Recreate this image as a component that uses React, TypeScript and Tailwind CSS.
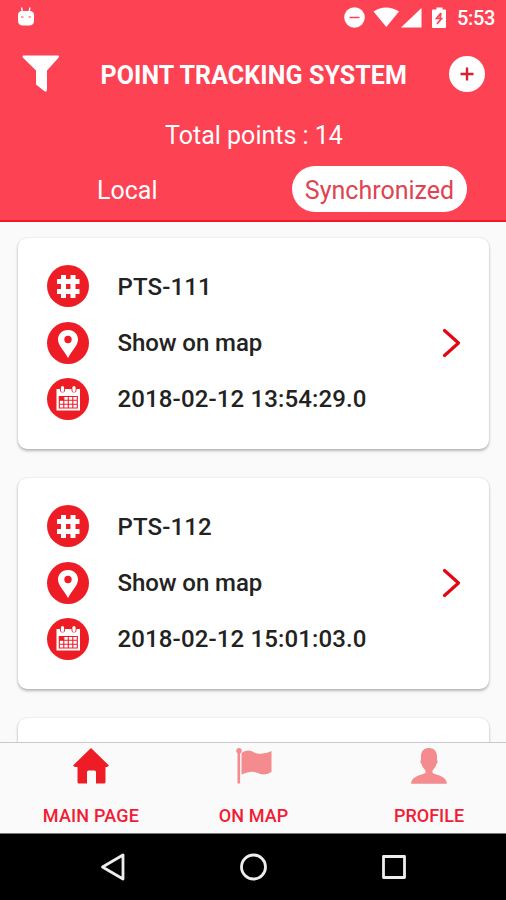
import type { ReactNode } from "react";

const points = [
  { id: "PTS-111", date: "2018-02-12 13:54:29.0" },
  { id: "PTS-112", date: "2018-02-12 15:01:03.0" },
];

function StatusBar() {
  return (
    <div className="flex h-9 items-center justify-between pl-4 pr-[11px]">
      <svg width="20" height="22" viewBox="0 0 20 22" className="mt-[-3px]">
        <path d="M5.5 1.500 6.500 6M14 1.500 13 6" stroke="#fff" strokeWidth="1.300" />
        <path d="M5 5h10q3 1 3 4v5.500q0 5-5 5H7q-5 0-5-5V9q0-3 3-4Z" fill="#fff" />
        <path d="M5 11h2.500M12.500 11H15" stroke="#fd4254" strokeWidth="1" />
      </svg>
      <div className="flex items-center">
        <svg width="115" height="24" viewBox="0 0 115 24">
          <circle cx="16.500" cy="11.500" r="10.300" fill="#fff" />
          <path d="M11.500 11.500h10" stroke="#fd4254" strokeWidth="1.500" />
          <path d="M35.500 5.500q12.500-8 25.500 0L48.300 21Z" fill="#fff" />
          <path d="M83.500 2v19.500H63Z" fill="#fff" />
          <path d="M96 3.500h2.500V1.500h6v2h2.500q1 0 1 1V21q0 1-1 1H95q-1 0-1-1V4.500q0-1 1-1Z" fill="#fff" />
          <path d="m103 7-4.500 5.500h5l-4.500 5.500M103 7l-1 5.500" fill="none" stroke="#fd4254" strokeWidth="1.700" />
        </svg>
        <span className="ml-1 w-[38px] whitespace-nowrap text-[20px] font-medium leading-6 tracking-[-0.3px]">5:53</span>
      </div>
    </div>
  );
}

function Header() {
  return (
    <header className="flex h-[222px] shrink-0 flex-col border-b-2 border-[#ef1b2b] bg-[#fd4254] text-white">
      <StatusBar />
      <div className="flex h-[75px] items-center justify-between pl-[22px] pr-[21px]">
        <svg width="38" height="38" viewBox="0 0 38 38">
          <path d="M1 .5h35.500q1 1 0 2.200L25 15.500v19.500q-.5 2.500-2.500 1.200l-8.500-6.700v-14L1 2.700Q0 1.500 1 .5Z" fill="#fff" />
        </svg>
        <h1 className="w-[308px] whitespace-nowrap pt-[3px] text-[25px] font-bold leading-none tracking-[0.100px]">
          POINT TRACKING SYSTEM
        </h1>
        <svg width="36" height="36" viewBox="0 0 36 36">
          <circle cx="18" cy="18" r="18" fill="#fff" />
          <path d="M18 11.500v13M11.500 18h13" stroke="#d8202f" strokeWidth="2.400" />
        </svg>
      </div>
      <p className="flex h-[49px] items-center justify-center pl-[2px] text-[25px] leading-none">Total points : 14</p>
      <div className="flex h-[58px] items-center pl-[97px]">
        <span className="w-[195px] pt-[2px] text-[25px] leading-none">Local</span>
        <span className="flex h-[46px] w-[175px] items-center justify-center rounded-full bg-white pt-[2px] text-[25px] leading-none text-[#e04352]">
          Synchronized
        </span>
      </div>
    </header>
  );
}

function Badge({ children }: { children: ReactNode }) {
  return (
    <svg width="42" height="42" viewBox="0 0 42 42">
      <circle cx="21" cy="21" r="21" fill="#ee1c25" />
      {children}
    </svg>
  );
}

function Card({ children }: { children?: ReactNode }) {
  return (
    <div className="flex h-[211px] shrink-0 items-center justify-between rounded-[9px] bg-white pb-[2px] pl-[29px] pr-[28px] shadow-[0_2px_3px_rgba(0,0,0,0.26),0_0_2px_rgba(0,0,0,0.14)]">
      {children}
    </div>
  );
}

function PointCard({ id, date }: { id: string; date: string }) {
  return (
    <Card>
      <div className="flex flex-col gap-[14.250px] text-[24px] font-medium leading-none tracking-[0.14px] text-[#222]">
        <div className="flex items-center gap-[28.500px]">
          <Badge>
            <path d="M16.500 10v23M26 10v23M10 16.500h22.500M10 26.500h22.500" stroke="#fff" strokeWidth="5" />
          </Badge>
          <span className="pt-px">{id}</span>
        </div>
        <div className="flex items-center gap-[28.500px]">
          <Badge>
            <path d="M21 8C14.500 8 11 12.500 11 17.500c0 5.500 5 9.500 10 18.500 5-9 10-13 10-18.500C31 12.500 27.500 8 21 8Z" fill="#fff" />
            <circle cx="21" cy="17.500" r="3.700" fill="#ee1c25" />
          </Badge>
          <span className="tracking-[-0.080px]">Show on map</span>
        </div>
        <div className="flex items-center gap-[28.500px]">
          <Badge>
            <path d="M9.500 11h23.500v21.500H9.500Z" fill="#fff" />
            <path d="M13 7v5a2.500 2.500 0 0 0 5 0V7ZM24.500 7v5a2.500 2.500 0 0 0 5 0V7Z" fill="#ee1c25" />
            <path d="M15.500 9.500v3M27 9.500v3" stroke="#fff" strokeWidth="3.200" strokeLinecap="round" />
            <path d="M12.300 18.500h18v11.500h-18ZM12.300 22.300h18M12.300 26.200h18M16.800 18.500V30M21.300 18.500V30M25.800 18.500V30" fill="none" stroke="#ee1c25" strokeWidth="1.100" />
            <path d="M12.300 18.500h4.500v3.800h-4.500Z" fill="#ee1c25" />
          </Badge>
          <span>{date}</span>
        </div>
      </div>
      <svg width="19" height="30" viewBox="0 0 19 30">
        <path d="m2.500 2.500 14 12.500-14 12.500" fill="none" stroke="#e30613" strokeWidth="3.200" strokeLinecap="round" strokeLinejoin="round" />
      </svg>
    </Card>
  );
}

function TabBar() {
  return (
    <nav className="flex h-[92px] shrink-0 border-b border-t border-b-[#777] border-t-[#c9c9c9] bg-[#fafafa] pl-[42px] text-[18px] font-medium leading-none text-[#f21c35]">
      <div className="flex w-[98px] flex-col items-center pt-[5px]">
        <svg width="36" height="36" viewBox="0 0 36 36">
          <path d="M18 0 36 17.500l-2 1.500h-1.500v15q0 1.500-1.500 1.500h-8V24q0-1.500-1.500-1.500h-6Q14 22.500 14 24v11.500H6Q4.500 35.500 4.500 34V19H2l-2-1.500Z" fill="#ee1c25" />
        </svg>
        <span className="mt-[23px] whitespace-nowrap tracking-[0.200px]">MAIN PAGE</span>
      </div>
      <div className="ml-[78px] flex w-[71px] flex-col items-center pt-[5px]">
        <svg width="36" height="36" viewBox="0 0 36 36" fill="#f38b8f">
          <circle cx="3" cy="2.800" r="2.700" />
          <path d="M1.500 2h2.600v33.500H1.500ZM5.500 5q5-3.500 10-2 5 3.500 11 2.500 5-.5 9-2.500v21q-5 3.500-11 2-6-3-11-2-4 .5-8 2.500Z" />
        </svg>
        <span className="mt-[23px] whitespace-nowrap tracking-[0.100px]">ON MAP</span>
      </div>
      <div className="ml-[104px] flex w-[72px] flex-col items-center pt-[5px]">
        <svg width="36" height="36" viewBox="0 0 36 36" fill="#f38b8f">
          <path d="M18 0c5 0 7.800 3 8 8v4q1.500 2-.8 4.500C24.500 20 22 21 21.500 23v2c4 2 14 3 14.500 10.800H0C.5 28 10.500 27 14.500 25v-2c-.5-2-3-3-3.700-6.500Q8.500 14 10 12V8c.2-5 3-8 8-8Z" />
        </svg>
        <span className="mt-[23px] whitespace-nowrap">PROFILE</span>
      </div>
    </nav>
  );
}

function SystemBar() {
  return (
    <div className="flex h-[66px] shrink-0 items-center bg-black pl-[99px]">
      <svg width="28" height="30" viewBox="0 0 28 30">
        <path d="M3.500 15 24 3v24Z" fill="none" stroke="#eee" strokeWidth="2.800" strokeLinejoin="round" />
      </svg>
      <svg width="28" height="28" viewBox="0 0 28 28" className="ml-[113px]">
        <circle cx="13.500" cy="14" r="12" fill="none" stroke="#eee" strokeWidth="2.800" />
      </svg>
      <svg width="26" height="26" viewBox="0 0 26 26" className="ml-[113px]">
        <path d="M2.500 2.500h21v21h-21Z" fill="none" stroke="#eee" strokeWidth="2.800" strokeLinejoin="round" />
      </svg>
    </div>
  );
}

export default function App() {
  return (
    <div className="flex h-[900px] w-[506px] flex-col overflow-hidden bg-[#fafafa] font-['Roboto',sans-serif]">
      <Header />
      <main className="flex min-h-0 flex-1 flex-col gap-[29px] overflow-hidden pl-[18px] pr-[17px] pt-[16px]">
        {points.map((point) => (
          <PointCard key={point.id} id={point.id} date={point.date} />
        ))}
        <Card />
      </main>
      <TabBar />
      <SystemBar />
    </div>
  );
}
